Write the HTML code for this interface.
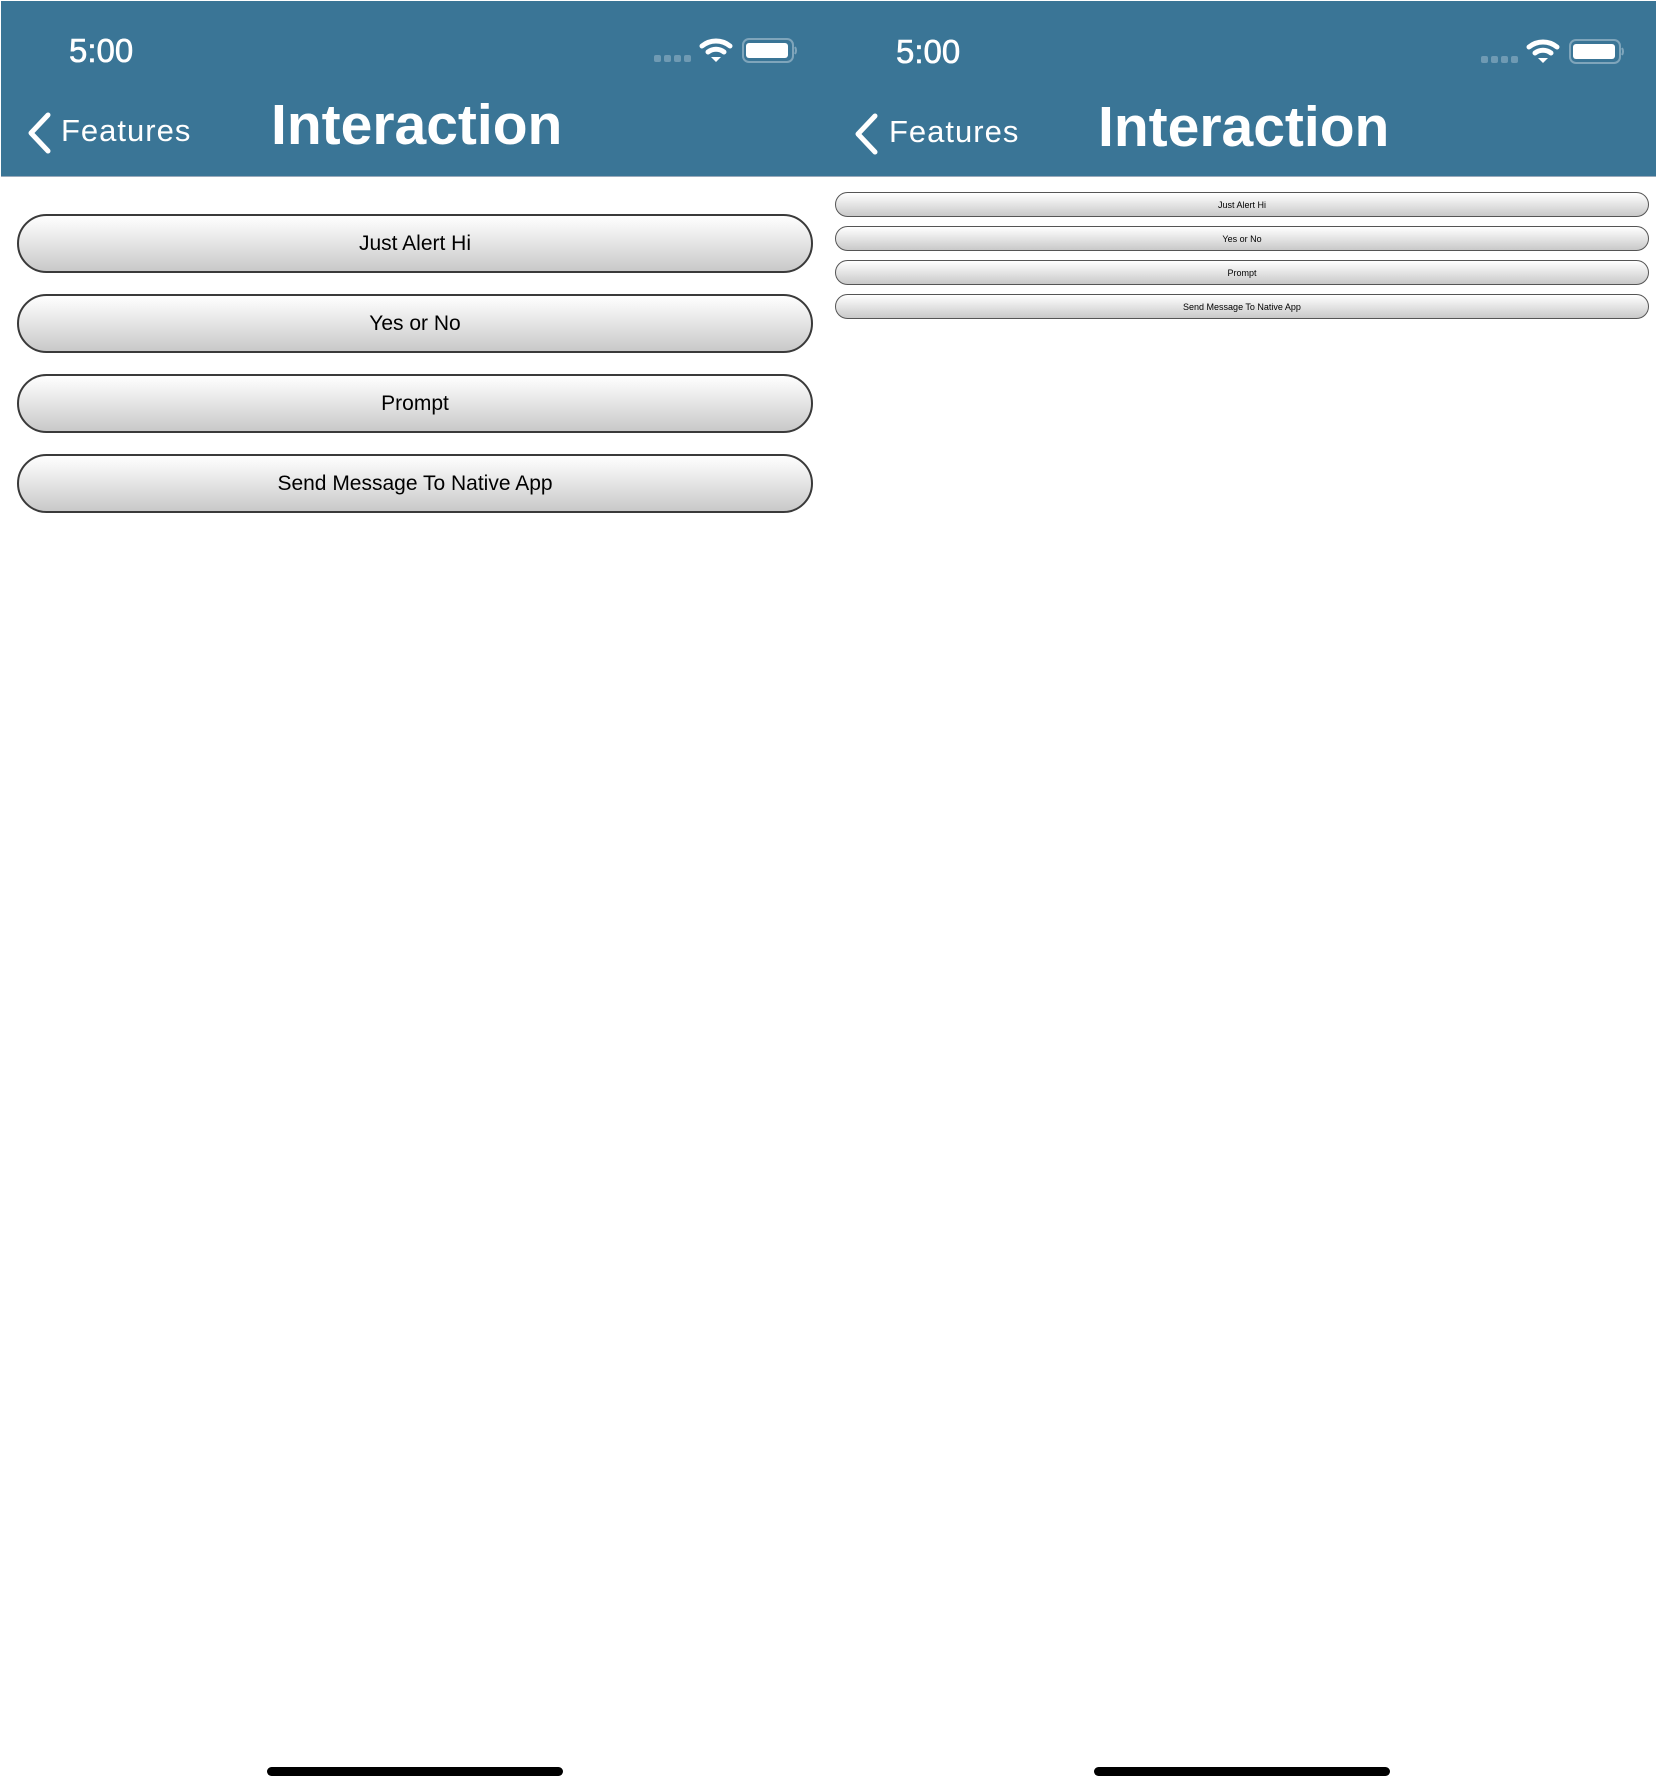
<!DOCTYPE html>
<html><head><meta charset="utf-8"><style>
*{margin:0;padding:0;box-sizing:border-box}
body{width:1656px;height:1792px;background:#fff;position:relative;overflow:hidden;font-family:"Liberation Sans",sans-serif}
.hdr{position:absolute;top:1px;height:176px;background:#3a7596;border-bottom:1px solid #9ab}
.t{position:absolute;color:#fff;white-space:nowrap}
.btn{position:absolute;border:2px solid #3a3a3a;background:linear-gradient(#fff,#c9c9c9);display:flex;align-items:center;justify-content:center;color:#000}
.home{position:absolute;top:1767px;height:9px;width:296px;background:#000;border-radius:5px}
</style></head><body>

<div class="hdr" style="left:1px;width:827px"></div>
<div class="hdr" style="left:828px;width:828px"></div>

<div class="t" style="left:69px;top:32px;font-size:33px;-webkit-text-stroke:0.6px #fff">5:00</div>
<div class="t" style="left:896px;top:33px;font-size:33px;-webkit-text-stroke:0.6px #fff">5:00</div>

<svg style="position:absolute;left:0;top:0" width="1656" height="180">
<g fill="#fff">
<g fill="#6f9ab3"><rect x="654" y="55" width="7" height="7" rx="2"/><rect x="664" y="55" width="7" height="7" rx="2"/><rect x="674" y="55" width="7" height="7" rx="2"/><rect x="684" y="55" width="7" height="7" rx="2"/></g>
<path d="M702 46 A22 22 0 0 1 730 46" stroke="#fff" stroke-width="5" fill="none" stroke-linecap="round"/>
<path d="M708 52 A13 13 0 0 1 724 52" stroke="#fff" stroke-width="5" fill="none" stroke-linecap="round"/>
<path d="M711 57 L716 62 L721 57 Z"/>
<rect x="743" y="39" width="50" height="23" rx="6" fill="none" stroke="#7fa5bb" stroke-width="2"/>
<rect x="746" y="43" width="42" height="15" rx="3"/>
<path d="M795 47 q2 3.5 0 7" stroke="#7fa5bb" stroke-width="2" fill="none"/>
<path d="M48 115 L31 133 L48 151" stroke="#fff" stroke-width="5" fill="none" stroke-linecap="round" stroke-linejoin="round"/>
</g>
<g transform="translate(827,1)">
<g fill="#6f9ab3"><rect x="654" y="55" width="7" height="7" rx="2"/><rect x="664" y="55" width="7" height="7" rx="2"/><rect x="674" y="55" width="7" height="7" rx="2"/><rect x="684" y="55" width="7" height="7" rx="2"/></g>
<path d="M702 46 A22 22 0 0 1 730 46" stroke="#fff" stroke-width="5" fill="none" stroke-linecap="round"/>
<path d="M708 52 A13 13 0 0 1 724 52" stroke="#fff" stroke-width="5" fill="none" stroke-linecap="round"/>
<path d="M711 57 L716 62 L721 57 Z" fill="#fff"/>
<rect x="743" y="39" width="50" height="23" rx="6" fill="none" stroke="#7fa5bb" stroke-width="2"/>
<rect x="746" y="43" width="42" height="15" rx="3" fill="#fff"/>
<path d="M795 47 q2 3.5 0 7" stroke="#7fa5bb" stroke-width="2" fill="none"/>
<path d="M48 115 L31 133 L48 151" stroke="#fff" stroke-width="5" fill="none" stroke-linecap="round" stroke-linejoin="round"/>
</g>
</svg>

<div class="t" style="left:61px;top:113px;font-size:31px;letter-spacing:1px">Features</div>
<div class="t" style="left:889px;top:114px;font-size:31px;letter-spacing:1px">Features</div>
<div class="t" style="left:271px;top:92px;font-size:57px;font-weight:bold">Interaction</div>
<div class="t" style="left:1098px;top:94px;font-size:57px;font-weight:bold">Interaction</div>

<div class="btn" style="left:17px;top:214px;width:796px;height:59px;border-radius:30px;font-size:21px">Just Alert Hi</div>
<div class="btn" style="left:17px;top:294px;width:796px;height:59px;border-radius:30px;font-size:21px">Yes or No</div>
<div class="btn" style="left:17px;top:374px;width:796px;height:59px;border-radius:30px;font-size:21px">Prompt</div>
<div class="btn" style="left:17px;top:454px;width:796px;height:59px;border-radius:30px;font-size:21px">Send Message To Native App</div>

<div class="btn" style="left:835px;top:192px;width:814px;height:25px;border-radius:13px;font-size:9px;border-width:1px;border-color:#555">Just Alert Hi</div>
<div class="btn" style="left:835px;top:226px;width:814px;height:25px;border-radius:13px;font-size:9px;border-width:1px;border-color:#555">Yes or No</div>
<div class="btn" style="left:835px;top:260px;width:814px;height:25px;border-radius:13px;font-size:9px;border-width:1px;border-color:#555">Prompt</div>
<div class="btn" style="left:835px;top:294px;width:814px;height:25px;border-radius:13px;font-size:9px;border-width:1px;border-color:#555">Send Message To Native App</div>

<div class="home" style="left:267px"></div>
<div class="home" style="left:1094px"></div>
</body></html>
